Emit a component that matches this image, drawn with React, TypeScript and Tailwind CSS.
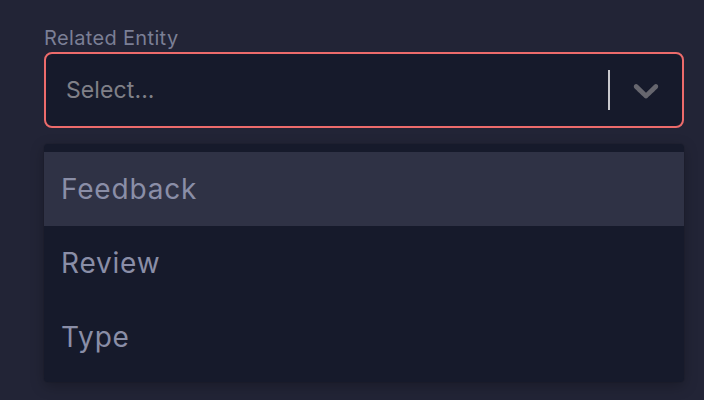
import { useState } from 'react';

const options = ['Feedback', 'Review', 'Type'];

export default function App() {
    const [active, setActive] = useState(0);

    return (
        <div className="w-full h-[400px] overflow-hidden bg-[#222436] pl-[44px] pr-[20px] pt-[24px]" style={{ fontFamily: 'Inter, "Noto Sans", sans-serif' }}>
            {/* Label */}
            <label className="block text-[20px] leading-[28px] text-[#7b7f95] tracking-[0.35px]">Related Entity</label>

            {/* Control */}
            <div className="h-[76px] flex items-center rounded-[8px] border-2 border-[#ec6b6b] bg-[#161a2b]">
                <div className="flex-1 pl-[20px] text-[23px] text-[#808088] tracking-[0.1px]">Select...</div>
                <span className="w-[2px] h-[40px] bg-[#c9c9ce]" />
                <div className="w-[72px] flex items-center justify-center">
                    <svg width="42" height="42" viewBox="0 0 20 20" fill="#66666e" aria-hidden="true">
                        <path d="M4.516 7.548c0.436-0.446 1.043-0.481 1.576 0l3.908 3.747 3.908-3.747c0.533-0.481 1.141-0.446 1.574 0 0.436 0.445 0.408 1.197 0 1.615-0.406 0.418-4.695 4.502-4.695 4.502-0.217 0.223-0.502 0.335-0.787 0.335s-0.57-0.112-0.789-0.335c0 0-4.287-4.084-4.695-4.502s-0.436-1.17 0-1.615z" />
                    </svg>
                </div>
            </div>

            {/* Menu */}
            <div className="mt-[16px] py-[8px] bg-[#161a2b] rounded-[4px] shadow-[0_0_0_1px_rgba(0,0,0,0.06),0_4px_14px_rgba(0,0,0,0.25)]">
                {options.map((option, i) => (
                    <div
                        key={option}
                        onMouseEnter={() => setActive(i)}
                        className={`h-[74px] flex items-center pl-[17px] text-[28px] tracking-[0.8px] text-[#8a8ea7] ${i === active ? 'bg-[#2f3245]' : ''}`}
                    >
                        {option}
                    </div>
                ))}
            </div>
        </div>
    );
}
